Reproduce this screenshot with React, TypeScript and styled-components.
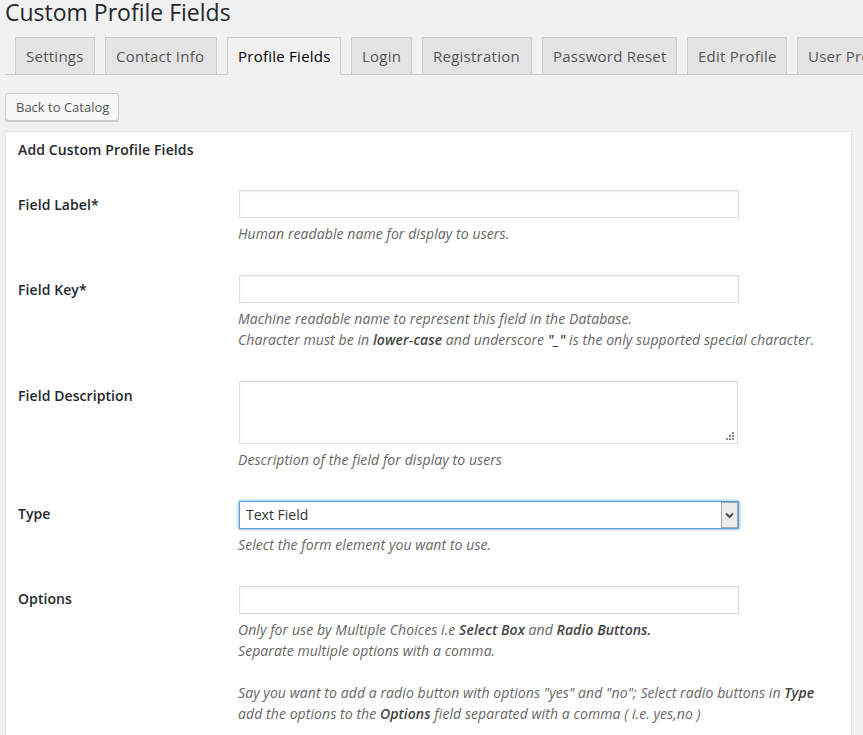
import React from "react";
import styled, { createGlobalStyle } from "styled-components";

const Global = createGlobalStyle`
  html, body { margin: 0; padding: 0; height: 735px; overflow: hidden; background: #f1f1f1; }
  body { font-family: "Open Sans", sans-serif; font-size: 14px; color: #444; }
  * { box-sizing: border-box; }
`;

const Page = styled.div`
  padding-left: 5px;
  height: 735px;
  overflow: hidden;
`;

const Title = styled.h1`
  margin: 0;
  height: 37px;
  font-size: 23px;
  font-weight: 400;
  line-height: 24px;
  color: #23282d;
`;

const Tabs = styled.nav`
  display: flex;
  gap: 10px;
  padding-left: 10px;
  height: 38px;
  border-bottom: 1px solid #ccc;
  white-space: nowrap;
`;

const Tab = styled.a<{ $active?: boolean; $w: number }>`
  flex: none;
  width: ${(p) => p.$w}px;
  height: ${(p) => (p.$active ? "38px" : "37px")};
  padding-left: 10px;
  border: 1px solid #ccc;
  border-bottom: ${(p) => (p.$active ? "1px solid #f1f1f1" : "0")};
  background: ${(p) => (p.$active ? "#f1f1f1" : "#e4e4e4")};
  color: ${(p) => (p.$active ? "#000" : "#555")};
  font-size: 15px;
  font-weight: 500;
  letter-spacing: 0.25px;
  line-height: 36px;
`;

const BackButton = styled.button`
  display: block;
  margin: 18px 0 10px;
  width: 114px;
  height: 28px;
  padding: 0 10px;
  border: 1px solid #ccc;
  border-radius: 3px;
  background: #f7f7f7;
  box-shadow: 0 1px 0 #ccc;
  color: #555;
  font-family: inherit;
  font-size: 13px;
  line-height: 26px;
  white-space: nowrap;
`;

const Card = styled.section`
  width: 847px;
  padding: 0 12px;
  background: #fff;
  border: 1px solid #e5e5e5;
  box-shadow: 0 1px 1px rgba(0, 0, 0, 0.04);
`;

const CardTitle = styled.h2`
  margin: 0;
  height: 58px;
  padding-top: 8px;
  font-size: 14px;
  font-weight: 600;
  letter-spacing: 0.12px;
  line-height: 20px;
  color: #23282d;
`;

const Row = styled.div`
  display: grid;
  grid-template-columns: 221px 500px;
  margin-bottom: 30px;
`;

const Label = styled.label<{ $top: number }>`
  padding-top: ${(p) => p.$top}px;
  font-size: 14px;
  font-weight: 600;
  letter-spacing: 0.08px;
  line-height: 20px;
  color: #23282d;
`;

const Field = styled.div`
  width: 590px;
`;

const TextInput = styled.input`
  display: block;
  width: 500px;
  height: 28px;
  border: 1px solid #ddd;
  box-shadow: inset 0 1px 2px rgba(0, 0, 0, 0.07);
  background: #fff;
`;

const AreaWrap = styled.div`
  position: relative;
  width: 499px;
  height: 63px;
`;

const TextArea = styled.textarea`
  display: block;
  width: 100%;
  height: 100%;
  border: 1px solid #ddd;
  box-shadow: inset 0 1px 2px rgba(0, 0, 0, 0.07);
  background: #fff;
  resize: none;
`;

const Grip = styled.svg`
  position: absolute;
  right: 3px;
  bottom: 3px;
  width: 9px;
  height: 9px;
`;

const SelectWrap = styled.div`
  position: relative;
  width: 500px;
  height: 28px;
`;

const SelectBox = styled.select`
  display: block;
  width: 100%;
  height: 100%;
  padding: 0 2px 0 6px;
  border: 1px solid #5b9dd9;
  box-shadow: 0 0 3px rgba(30, 140, 190, 0.8);
  outline: 0;
  appearance: none;
  background: #fff;
  color: #32373c;
  font-family: inherit;
  font-size: 14px;
  line-height: 26px;
`;

const SelectArrow = styled.span`
  position: absolute;
  top: 1px;
  right: 1px;
  bottom: 1px;
  width: 17px;
  display: flex;
  align-items: center;
  justify-content: center;
  border: 1px solid #a6a6a6;
  background: #ececec;
  pointer-events: none;
`;

const Help = styled.p`
  margin: 5px 0 1px -1px;
  font-size: 14px;
  font-style: italic;
  letter-spacing: 0.08px;
  line-height: 21px;
  color: #666;
  white-space: nowrap;
  strong { font-weight: 600; color: #444; }
`;

export default function App() {
  return (
    <Page>
      <Global />
      <Title>Custom Profile Fields</Title>
      <Tabs>
        <Tab $w={80}>Settings</Tab>
        <Tab $w={112}>Contact Info</Tab>
        <Tab $w={114} $active>Profile Fields</Tab>
        <Tab $w={61}>Login</Tab>
        <Tab $w={110}>Registration</Tab>
        <Tab $w={135}>Password Reset</Tab>
        <Tab $w={100}>Edit Profile</Tab>
        <Tab $w={110}>User Profile</Tab>
      </Tabs>
      <BackButton>Back to Catalog</BackButton>
      <Card>
        <CardTitle>Add Custom Profile Fields</CardTitle>
        <Row>
          <Label $top={5}>Field Label*</Label>
          <Field>
            <TextInput />
            <Help>Human readable name for display to users.</Help>
          </Field>
        </Row>
        <Row>
          <Label $top={5}>Field Key*</Label>
          <Field>
            <TextInput />
            <Help>
              Machine readable name to represent this field in the Database.
              <br />
              Character must be in <strong>lower-case</strong> and underscore <strong>"_"</strong> is the only supported special character.
            </Help>
          </Field>
        </Row>
        <Row>
          <Label $top={5}>Field Description</Label>
          <Field>
            <AreaWrap>
              <TextArea />
              <Grip viewBox="0 0 9 9" aria-hidden="true">
                <g fill="#8c8c8c">
                  <rect x="6" y="0" width="2" height="2" />
                  <rect x="3" y="3" width="2" height="2" />
                  <rect x="6" y="3" width="2" height="2" />
                  <rect x="0" y="6" width="2" height="2" />
                  <rect x="3" y="6" width="2" height="2" />
                  <rect x="6" y="6" width="2" height="2" />
                </g>
              </Grip>
            </AreaWrap>
            <Help>Description of the field for display to users</Help>
          </Field>
        </Row>
        <Row>
          <Label $top={3}>Type</Label>
          <Field>
            <SelectWrap>
              <SelectBox defaultValue="Text Field">
                <option>Text Field</option>
              </SelectBox>
              <SelectArrow>
                <svg width="9" height="7" viewBox="0 0 9 7" aria-hidden="true">
                  <path d="M1 1.5 L4.5 5 L8 1.5" fill="none" stroke="#4d4d4d" strokeWidth="2" />
                </svg>
              </SelectArrow>
            </SelectWrap>
            <Help>Select the form element you want to use.</Help>
          </Field>
        </Row>
        <Row>
          <Label $top={3}>Options</Label>
          <Field>
            <TextInput />
            <Help>
              Only for use by Multiple Choices i.e <strong>Select Box</strong> and <strong>Radio Buttons.</strong>
              <br />
              Separate multiple options with a comma.
              <br />
              <br />
              Say you want to add a radio button with options "yes" and "no"; Select radio buttons in <strong>Type</strong>
              <br />
              add the options to the <strong>Options</strong> field separated with a comma ( i.e. yes,no )
            </Help>
          </Field>
        </Row>
      </Card>
    </Page>
  );
}
